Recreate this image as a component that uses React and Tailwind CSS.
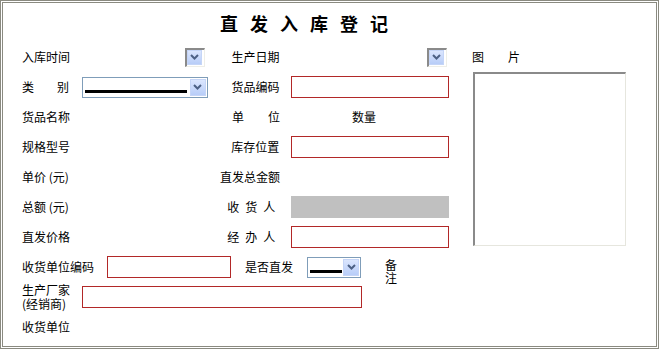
import React from "react";

function Chevron() {
  return (
    <svg width="9" height="6" viewBox="0 0 9 6">
      <polyline points="1,1 4.5,4.5 8,1" fill="none" stroke="#4d6185" strokeWidth="2" />
    </svg>
  );
}

function ArrowButton({ className = "" }) {
  return (
    <div className={"flex items-center justify-center bg-gradient-to-b from-[#dbe6fe] to-[#b8cdf8] border border-[#c5d5f7] " + className}>
      <Chevron />
    </div>
  );
}

// the little date picker box with only the button visible
function DateDrop() {
  return (
    <div className="w-[20px] h-[19px] border-t-2 border-l-2 border-t-[#8a8a8a] border-l-[#8a8a8a] border-r border-b border-r-[#eeeee8] border-b-[#eeeee8] flex items-start">
      <ArrowButton className="w-[15px] h-[15px]" />
    </div>
  );
}

function Select({ width, line }) {
  return (
    <div className={"h-[21px] border border-[#7f9db9] bg-white flex items-center pl-[2px] pr-[1px] " + width}>
      <div className="flex-1 h-full flex items-end pb-[4px]">
        <div className={"h-[3px] bg-black " + line}></div>
      </div>
      <ArrowButton className="w-[16px] h-[17px]" />
    </div>
  );
}

function RedInput({ width = "w-[158px]" }) {
  return <div className={"h-[22px] border border-[#b22828] bg-white " + width}></div>;
}

function Row({ children }) {
  return <div className="h-[30px] flex items-center">{children}</div>;
}

function MidLabel({ children }) {
  return <div className="w-[85px] flex justify-end pr-[12px]">{children}</div>;
}

export default function App() {
  return (
    <div className="w-[660px] h-[350px] bg-white text-[12px] leading-[14px] text-black font-['Noto_Sans_CJK_SC',sans-serif]">
      <div className="w-[659px] h-[349px] border-[3px] border-double border-[#8a8a80]">
        <div className="h-[39px] flex items-center pl-[217px] gap-[12px] text-[18px] font-bold">
          <span>直</span>
          <span>发</span>
          <span>入</span>
          <span>库</span>
          <span>登</span>
          <span>记</span>
        </div>

        <div className="flex pl-[19px]">
          <div className="w-[427px]">
            <Row>
              <div className="w-[60px]">入库时间</div>
              <div className="w-[125px] flex justify-end pr-[2px]">
                <DateDrop />
              </div>
              <MidLabel>生产日期</MidLabel>
              <div className="w-[158px] flex justify-end pr-[2px]">
                <DateDrop />
              </div>
            </Row>
            <Row>
              <div className="w-[60px]">
                <div className="w-[47px] flex justify-between">
                  <span>类</span>
                  <span>别</span>
                </div>
              </div>
              <Select width="w-[126px]" line="w-[102px]" />
              <div className="w-[84px] flex justify-end pr-[12px]">货品编码</div>
              <RedInput />
            </Row>
            <Row>
              <div className="w-[185px]">货品名称</div>
              <MidLabel>
                <div className="w-[48px] flex justify-between">
                  <span>单</span>
                  <span>位</span>
                </div>
              </MidLabel>
              <div className="pl-[60px]">数量</div>
            </Row>
            <Row>
              <div className="w-[185px]">规格型号</div>
              <MidLabel>库存位置</MidLabel>
              <RedInput />
            </Row>
            <Row>
              <div className="w-[185px]">单价 (元)</div>
              <MidLabel>直发总金额</MidLabel>
            </Row>
            <Row>
              <div className="w-[185px]">总额 (元)</div>
              <div className="w-[85px] flex justify-end pr-[16px] gap-[6px]">
                <span>收</span>
                <span>货</span>
                <span>人</span>
              </div>
              <div className="w-[158px] h-[22px] bg-[#c0c0c0]"></div>
            </Row>
            <Row>
              <div className="w-[185px]">直发价格</div>
              <div className="w-[85px] flex justify-end pr-[16px] gap-[6px]">
                <span>经</span>
                <span>办</span>
                <span>人</span>
              </div>
              <RedInput />
            </Row>
          </div>

          <div className="pl-[23px]">
            <div className="h-[30px] flex items-center gap-[24px]">
              <span>图</span>
              <span>片</span>
            </div>
            <div className="ml-[1px] w-[153px] h-[174px] bg-white border-t-2 border-l-2 border-t-[#8a8a8a] border-l-[#8a8a8a] border-r border-b border-r-[#e6e6de] border-b-[#e6e6de]"></div>
          </div>
        </div>

        <div className="pl-[19px]">
          <Row>
            <div className="w-[85px]">收货单位编码</div>
            <RedInput width="w-[124px]" />
            <div className="w-[76px] pl-[14px]">是否直发</div>
            <Select width="w-[54px]" line="w-[32px]" />
            <div className="pl-[24px] flex flex-col leading-[13px] pt-[8px]">
              <span>备</span>
              <span>注</span>
            </div>
          </Row>
          <Row>
            <div className="w-[60px] flex flex-col leading-[14px]">
              <span>生产厂家</span>
              <span>(经销商)</span>
            </div>
            <RedInput width="w-[280px]" />
          </Row>
          <Row>
            <div>收货单位</div>
          </Row>
        </div>
      </div>
    </div>
  );
}
